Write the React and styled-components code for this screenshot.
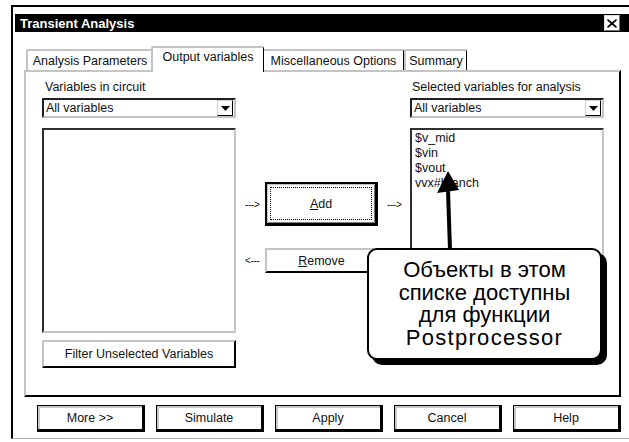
import React from "react";
import styled, { createGlobalStyle } from "styled-components";

const GlobalStyle = createGlobalStyle`
  html, body {
    margin: 0;
    padding: 0;
    background: #fff;
  }
  body {
    width: 629px;
    height: 442px;
    overflow: hidden;
    font-family: "Liberation Sans", Arial, sans-serif;
    font-size: 12.5px;
    color: #111;
  }
`;

const Page = styled.div`
  position: relative;
  height: 442px;
  box-sizing: border-box;
  padding: 5px 0 0 11px;
`;

const Window = styled.div`
  width: 618px;
  height: 434px;
  box-sizing: border-box;
  border-top: 2px solid #000;
  border-left: 2px solid #000;
  border-bottom: 1px solid #b4b4b4;
  padding: 7px 0 0 2px;
  display: flex;
  flex-direction: column;
`;

const TitleBar = styled.div`
  height: 18px;
  background: #000;
  color: #fff;
  font-weight: bold;
  font-size: 13px;
  display: flex;
  align-items: center;
  justify-content: space-between;
  padding-left: 5px;
`;

const CloseBox = styled.div`
  width: 16px;
  height: 16px;
  box-sizing: border-box;
  margin-right: 9px;
  background: #fff;
  border: 1px solid;
  border-color: #e0e0e0 #707070 #707070 #e0e0e0;
  display: flex;
  align-items: center;
  justify-content: center;
`;

const Body = styled.div`
  padding: 14px 0 0 9px;
`;

const TabRow = styled.div`
  display: flex;
  align-items: flex-end;
  height: 24px;
  padding-left: 2px;
  position: relative;
  z-index: 1;
`;

const Tab = styled.div`
  box-sizing: border-box;
  width: ${(p) => p.$w}px;
  height: ${(p) => (p.$active ? 26 : 21)}px;
  margin: ${(p) => (p.$active ? "0 -2px -2px" : "0")};
  background: #fff;
  border-top: 2px solid #c4c4c4;
  border-left: 2px solid #c4c4c4;
  border-right: 1px solid #000;
  border-radius: 2px 2px 0 0;
  display: flex;
  align-items: ${(p) => (p.$active ? "flex-start" : "center")};
  padding-top: ${(p) => (p.$active ? 2 : 0)}px;
  justify-content: center;
  white-space: nowrap;
  position: relative;
  z-index: ${(p) => (p.$active ? 2 : 1)};
`;

const Panel = styled.div`
  width: 597px;
  height: 327px;
  box-sizing: border-box;
  border-top: 2px solid #c4c4c4;
  border-left: 2px solid #c4c4c4;
  border-right: 2px solid #000;
  border-bottom: 2px solid #000;
  padding: 8px 15px 0 16px;
  display: grid;
  grid-template-columns: 194px 1fr 194px;
`;

const Column = styled.div`
  display: flex;
  flex-direction: column;
`;

const Label = styled.div`
  line-height: 14px;
  padding-left: ${(p) => p.$inset || 3}px;
  margin-bottom: 4px;
`;

const Combo = styled.div`
  height: 20px;
  box-sizing: border-box;
  border: 2px solid;
  border-color: #202020 #c4c4c4 #c4c4c4 #202020;
  display: flex;
  align-items: center;
  justify-content: space-between;
  padding-left: 2px;
  margin-bottom: 10px;
`;

const DropButton = styled.div`
  width: 16px;
  height: 16px;
  box-sizing: border-box;
  margin-right: 1px;
  border: 1px solid;
  border-color: #d0d0d0 #000 #000 #d0d0d0;
  display: flex;
  align-items: center;
  justify-content: center;
`;

const ListBox = styled.div`
  height: 205px;
  box-sizing: border-box;
  border: 2px solid;
  border-color: #303030 #c4c4c4 #c4c4c4 #303030;
  padding: 1px 3px;
  line-height: 15px;
`;

const FlatButton = styled.div`
  box-sizing: border-box;
  height: ${(p) => p.$h || 28}px;
  border: 2px solid;
  border-color: #c4c4c4 #000 #000 #c4c4c4;
  display: flex;
  align-items: center;
  justify-content: center;
  margin-top: ${(p) => p.$mt || 0}px;
`;

const Middle = styled.div`
  display: grid;
  grid-template-columns: 29px 113px 1fr;
  grid-template-rows: 44px 25px;
  row-gap: 22px;
  align-items: center;
  padding-top: 102px;
  align-content: start;
`;

const Hint = styled.span`
  font-size: 10px;
  letter-spacing: -0.3px;
  padding-left: ${(p) => p.$pl}px;
`;

const DefaultButton = styled.div`
  height: 44px;
  box-sizing: border-box;
  border: 2px solid #000;
  border-right-width: 3px;
  border-bottom-width: 3px;
  box-shadow: inset 1px 1px 0 #c4c4c4, inset -1px -1px 0 #808080;
  padding: 3px;
  display: flex;
`;

const FocusRect = styled.div`
  flex: 1;
  border: 1px dotted #000;
  display: flex;
  align-items: center;
  justify-content: center;
`;

const ButtonRow = styled.div`
  display: flex;
  gap: 11px;
  padding: 8px 0 0 13px;
`;

const DialogButton = styled.div`
  width: 108px;
  height: 27px;
  box-sizing: border-box;
  border: 1px solid #000;
  border-right-width: 3px;
  border-bottom-width: 3px;
  box-shadow: inset 2px 2px 0 #c8c8c8;
  display: flex;
  align-items: center;
  justify-content: center;
`;

const Callout = styled.div`
  position: absolute;
  left: 367px;
  top: 248px;
  width: 235px;
  height: 112px;
  box-sizing: border-box;
  background: #fff;
  border: 2px solid #000;
  border-radius: 10px;
  box-shadow: 5px 5px 0 #000;
  padding-top: 9px;
  text-align: center;
  font-family: "Liberation Sans", Arial, sans-serif;
  font-size: 22px;
  line-height: 22.5px;
  color: #000;
  z-index: 5;
`;

const CalloutLine = styled.div`
  letter-spacing: ${(p) => p.$ls || 0}px;
`;

const Pointer = styled.svg`
  position: absolute;
  left: 430px;
  top: 165px;
  z-index: 4;
`;

const tabs = [
  { label: "Analysis Parameters", w: 127 },
  { label: "Output variables", w: 113, active: true },
  { label: "Miscellaneous Options", w: 142 },
  { label: "Summary", w: 63 },
];

const selected = ["$v_mid", "$vin", "$vout", "vvx#branch"];

const Arrow = () => (
  <svg width="9" height="5" viewBox="0 0 9 5">
    <path d="M0 0 H9 L4.5 5 Z" fill="#000" />
  </svg>
);

const Underline = styled.span`
  text-decoration: underline;
`;

export default function App() {
  return (
    <Page>
      <GlobalStyle />
      <Window>
        <TitleBar>
          <span>Transient Analysis</span>
          <CloseBox>
            <svg width="10" height="9" viewBox="0 0 10 9">
              <path d="M1 0 L5 3.2 L9 0 L10 1.3 L6.4 4.5 L10 7.7 L9 9 L5 5.8 L1 9 L0 7.7 L3.6 4.5 L0 1.3 Z" fill="#000" />
            </svg>
          </CloseBox>
        </TitleBar>
        <Body>
          <TabRow>
            {tabs.map((t) => (
              <Tab key={t.label} $w={t.w} $active={t.active}>
                {t.label}
              </Tab>
            ))}
          </TabRow>
          <Panel>
            <Column>
              <Label>Variables in circuit</Label>
              <Combo>
                <span>All variables</span>
                <DropButton>
                  <Arrow />
                </DropButton>
              </Combo>
              <ListBox />
              <FlatButton $mt={7}>Filter Unselected Variables</FlatButton>
            </Column>
            <Middle>
              <Hint $pl={9}>---&gt;</Hint>
              <DefaultButton>
                <FocusRect>
                  <span>
                    <Underline>A</Underline>dd
                  </span>
                </FocusRect>
              </DefaultButton>
              <Hint $pl={9}>---&gt;</Hint>
              <Hint $pl={9}>&lt;---</Hint>
              <FlatButton $h={25}>
                <span>
                  <Underline>R</Underline>emove
                </span>
              </FlatButton>
            </Middle>
            <Column>
              <Label $inset={2}>Selected variables for analysis</Label>
              <Combo>
                <span>All variables</span>
                <DropButton>
                  <Arrow />
                </DropButton>
              </Combo>
              <ListBox>
                {selected.map((v) => (
                  <div key={v}>{v}</div>
                ))}
              </ListBox>
            </Column>
          </Panel>
          <ButtonRow>
            <DialogButton>More &gt;&gt;</DialogButton>
            <DialogButton>Simulate</DialogButton>
            <DialogButton>Apply</DialogButton>
            <DialogButton>Cancel</DialogButton>
            <DialogButton>Help</DialogButton>
          </ButtonRow>
        </Body>
      </Window>
      <Pointer width="40" height="90" viewBox="0 0 40 90">
        <path d="M16 25 L20 25 L22 85 L18 85 Z" fill="#000" />
        <path d="M18 6 L7 28 L29 25 Z" fill="#000" />
      </Pointer>
      <Callout>
        <CalloutLine>Объекты в этом</CalloutLine>
        <CalloutLine>списке доступны</CalloutLine>
        <CalloutLine>для функции</CalloutLine>
        <CalloutLine $ls={1.3}>Postprocessor</CalloutLine>
      </Callout>
    </Page>
  );
}
